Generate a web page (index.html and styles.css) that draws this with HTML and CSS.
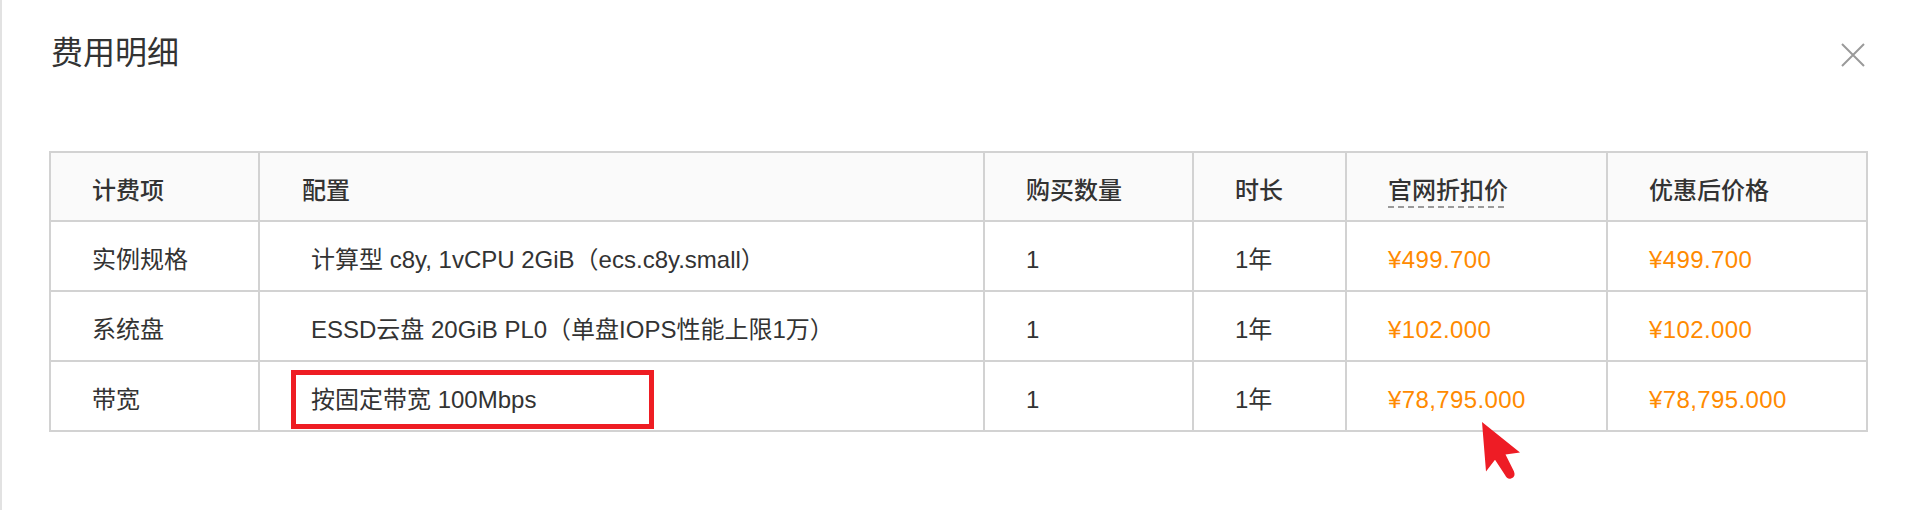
FILE: index.html
```html
<!DOCTYPE html>
<html lang="zh-CN">
<head>
<meta charset="utf-8">
<title>费用明细</title>
<link rel="stylesheet" href="styles.css">
</head>
<body>
<div class="modal">
  <div class="modal-header">
    <div class="modal-title">费用明细</div>
    <svg class="close" width="24" height="24" viewBox="0 0 24 24" aria-label="关闭">
      <path d="M1 1 L23 23 M23 1 L1 23" stroke="#9a9a9a" stroke-width="2" fill="none"/>
    </svg>
  </div>
  <div class="modal-body">
    <div class="fee-table">
      <div class="cell head">计费项</div>
      <div class="cell head c2">配置</div>
      <div class="cell head">购买数量</div>
      <div class="cell head">时长</div>
      <div class="cell head"><span class="tip">官网折扣价</span></div>
      <div class="cell head">优惠后价格</div>

      <div class="cell">实例规格</div>
      <div class="cell conf">计算型 c8y, 1vCPU 2GiB（ecs.c8y.small）</div>
      <div class="cell">1</div>
      <div class="cell">1年</div>
      <div class="cell price">¥499.700</div>
      <div class="cell price">¥499.700</div>

      <div class="cell">系统盘</div>
      <div class="cell conf">ESSD云盘 20GiB PL0（单盘IOPS性能上限1万）</div>
      <div class="cell">1</div>
      <div class="cell">1年</div>
      <div class="cell price">¥102.000</div>
      <div class="cell price">¥102.000</div>

      <div class="cell">带宽</div>
      <div class="cell conf marked">按固定带宽 100Mbps<span class="mark"></span></div>
      <div class="cell">1</div>
      <div class="cell">1年</div>
      <div class="cell price">¥78,795.000</div>
      <div class="cell price">¥78,795.000</div>
    </div>
  </div>
  <svg class="cursor" width="44" height="62" viewBox="0 0 44 62">
    <path d="M2 2 L40 32.6 L25.5 34.4 L34 51.5 Q36 57 31 58.5 Q27 59.5 25 55 L15 39.8 L6 51.5 Z" fill="#ee1c25"/>
  </svg>
</div>
</body>
</html>
```

FILE: styles.css
```css
html, body {
  margin: 0;
  padding: 0;
  background: #ffffff;
}

body {
  font-family: "Liberation Sans", "Noto Sans CJK SC", sans-serif;
  color: #333333;
}

.modal {
  position: relative;
  box-sizing: border-box;
  height: 510px;
  border-left: 2px solid #e2e2e2;
  overflow: hidden;
}

.modal-header {
  box-sizing: border-box;
  height: 151px;
  padding: 30px 51px 0 49px;
  display: flex;
  justify-content: space-between;
  align-items: flex-start;
}

.modal-title {
  font-family: "Noto Sans CJK SC", sans-serif;
  font-size: 32px;
  line-height: 40px;
  font-weight: 400;
  color: #333333;
}

.close {
  display: block;
  margin-top: 13px;
}

.modal-body {
  padding-left: 47px;
}

.fee-table {
  display: grid;
  grid-template-columns: 209px 725px 209px 153px 261px 260px;
  width: max-content;
  border-left: 2px solid #d2d2d2;
  border-top: 2px solid #d2d2d2;
}

.cell {
  box-sizing: border-box;
  height: 70px;
  padding: 23px 10px 0 41px;
  border-right: 2px solid #d2d2d2;
  border-bottom: 2px solid #d2d2d2;
  font-size: 24px;
  line-height: 30px;
  white-space: nowrap;
  color: #333333;
}

.head {
  height: 69px;
  background: #fafafa;
  font-weight: 500;
  color: #333333;
}

.head.c2 {
  padding-left: 42px;
}

.conf {
  padding-left: 51px;
}

.tip {
  display: inline-block;
  line-height: 30px;
  background-image: repeating-linear-gradient(to right, #9a9a9a 0 6px, transparent 6px 10px);
  background-size: 100% 2px;
  background-repeat: no-repeat;
  background-position: left bottom;
  height: 32px;
}

.price {
  color: #ff8a00;
  letter-spacing: 0.4px;
}

.marked {
  position: relative;
}

.mark {
  position: absolute;
  left: 31px;
  top: 8px;
  width: 363px;
  height: 59px;
  box-sizing: border-box;
  border: 5px solid #ee1d23;
}

.cursor {
  position: absolute;
  left: 1478px;
  top: 420px;
}
```
